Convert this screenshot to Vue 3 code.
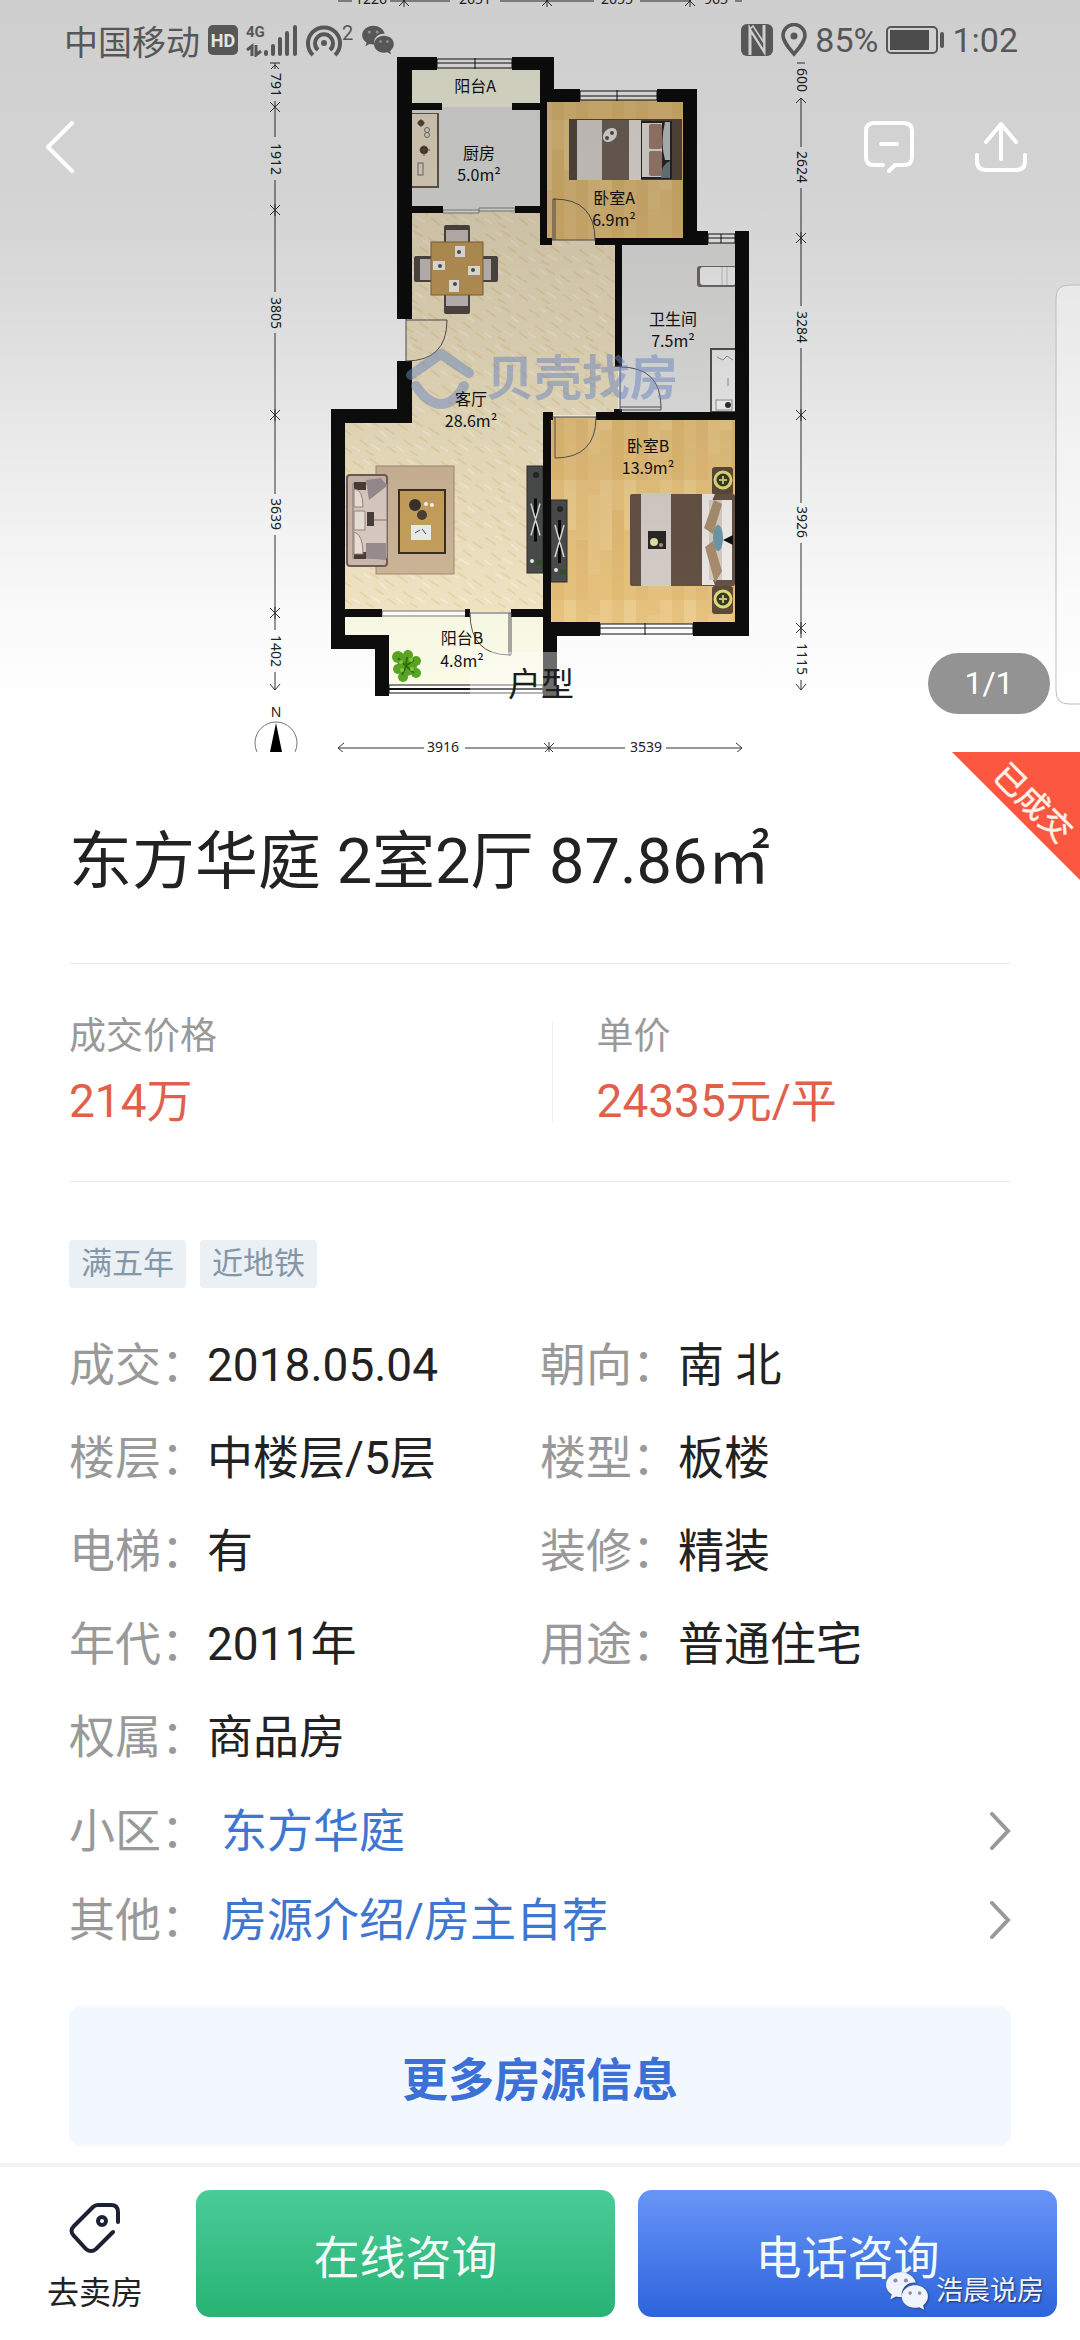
<template>
  <div class="page">
    <section class="hero">
      <svg class="plan" viewBox="0 0 1080 752" role="img" aria-label="户型图">
        <defs>
          <linearGradient id="shade" x1="0" y1="0" x2="0" y2="1">
            <stop offset="0" stop-color="#000" stop-opacity="0.19" />
            <stop offset="0.27" stop-color="#000" stop-opacity="0.17" />
            <stop offset="0.44" stop-color="#000" stop-opacity="0.13" />
            <stop offset="0.6" stop-color="#000" stop-opacity="0.08" />
            <stop offset="0.8" stop-color="#000" stop-opacity="0.025" />
            <stop offset="0.95" stop-color="#000" stop-opacity="0" />
          </linearGradient>
          <pattern id="wood" width="60" height="120" patternUnits="userSpaceOnUse">
            <rect width="60" height="120" fill="#ebc680" />
            <rect x="0" y="0" width="12" height="70" fill="#efcd8c" />
            <rect x="12" y="30" width="12" height="90" fill="#e7bf76" />
            <rect x="24" y="0" width="12" height="50" fill="#f0d091" />
            <rect x="36" y="60" width="12" height="60" fill="#e8c07a" />
            <rect x="48" y="15" width="12" height="80" fill="#edca87" />
          </pattern>
          <pattern id="marble" width="44" height="38" patternUnits="userSpaceOnUse">
            <rect width="44" height="38" fill="#f4e7c6" />
            <path d="M2 6l9 6M18 3l8 5M33 10l9 6M8 22l8 6M24 19l7 5M36 29l7 5M14 33l7 4" stroke="#e6cd93" stroke-width="2" stroke-linecap="round" opacity="0.5" />
            <path d="M12 4l6 4M28 13l6 5M1 29l6 4M20 27l8 5" stroke="#faf1d9" stroke-width="2" stroke-linecap="round" />
          </pattern>
          <symbol id="wechat" viewBox="0 0 42 38">
            <path fill="currentColor" d="M15 1C7 1 1 6.500 1 13c0 4 2 7 5.500 9.300L5 27l5.500-2.800c1.500.4 3 .6 4.500.6h1.200C14.500 17 21 10.500 29 11h.5C28 5 22 1 15 1z" />
            <path fill="currentColor" d="M41 24c0-6-5.500-10.500-12.500-10.500S16 18.500 16 24.500 21.500 35 28.500 35c1.500 0 3-.2 4.300-.6L37.500 37l-1.200-4.200C39.300 30.600 41 27.500 41 24z" />
            <g class="eyes"><circle cx="10" cy="9" r="2" /><circle cx="20" cy="9" r="2" /><circle cx="24" cy="21" r="1.700" /><circle cx="33" cy="21" r="1.700" /></g>
          </symbol>
        </defs>

        <rect width="1080" height="752" fill="#fff" />

        <!-- 地面 -->
        <rect x="412" y="68" width="128" height="40" fill="#fafbe6" />
        <rect x="412" y="107" width="128" height="103" fill="#e9e9e7" />
        <path d="M406 319H412V210H541V238H618V415H547V612H342V420H412V361H406Z" fill="url(#marble)" />
        <rect x="547" y="100" width="136" height="140" fill="url(#wood)" />
        <rect x="620" y="243" width="116" height="171" fill="#eaeae9" />
        <rect x="550" y="417" width="186" height="208" fill="url(#wood)" />
        <path d="M342 614H545V692H388V638H342Z" fill="#fcfde8" />

        <!-- 厨房与餐桌 -->
        <rect x="412" y="113" width="27" height="75" fill="#665f50" />
        <rect x="412" y="114" width="25" height="72" fill="#f2e5cf" />
        <g fill="#443a2d"><circle cx="421" cy="123" r="3" /><circle cx="424" cy="150" r="4" /></g>
        <path d="M417 123h8M421 119v8M419 150h11M424 145v11" stroke="#6b5c49" />
        <g fill="none" stroke="#777"><circle cx="427" cy="130" r="2.500" /><circle cx="427" cy="135" r="2.500" /><rect x="418" y="163" width="5" height="12" /></g>
        <g fill="#544b46">
          <rect x="444" y="225" width="26" height="22" rx="2" /><rect x="444" y="290" width="26" height="24" rx="2" />
          <rect x="414" y="256" width="22" height="26" rx="2" /><rect x="476" y="256" width="22" height="26" rx="2" />
        </g>
        <g fill="#cfc6c4">
          <rect x="446" y="230" width="22" height="16" /><rect x="446" y="292" width="22" height="14" />
          <rect x="420" y="259" width="14" height="21" /><rect x="478" y="259" width="13" height="21" />
        </g>
        <rect x="431" y="242" width="52" height="53" fill="#c79f5d" stroke="#8e6d38" />
        <g fill="#fbf8f0"><rect x="455" y="246" width="10" height="11" /><rect x="433" y="261" width="12" height="9" /><rect x="468" y="266" width="12" height="9" /><rect x="449" y="280" width="10" height="12" /></g>
        <g fill="#555"><circle cx="459" cy="252" r="2" /><circle cx="440" cy="266" r="2" /><circle cx="473" cy="270" r="2" /><circle cx="455" cy="284" r="2" /></g>

        <!-- 卧室A的床 -->
        <rect x="569" y="119" width="113" height="61" fill="#5c4c42" />
        <rect x="577" y="120" width="25" height="60" fill="#e2dcd6" />
        <rect x="602" y="120" width="27" height="60" fill="#75675d" />
        <rect x="629" y="120" width="12" height="60" fill="#f1e9e3" />
        <rect x="641" y="121" width="31" height="58" fill="#2a2726" />
        <rect x="642" y="123" width="20" height="54" fill="#efebe6" />
        <rect x="649" y="124" width="13" height="25" rx="2" fill="#a78576" />
        <rect x="649" y="151" width="13" height="25" rx="2" fill="#a78576" />
        <path d="M665 122q-5 20 0 38h5v-38z" fill="#c6cdd0" />
        <path d="M661 178q0-14 9-17v17z" fill="#71838a" />
        <ellipse cx="610" cy="135" rx="8" ry="6" fill="#f1ece6" transform="rotate(-45 610 135)" />
        <circle cx="607" cy="138" r="2" fill="#555" /><circle cx="612" cy="133" r="2" fill="#555" />

        <!-- 卫生间 -->
        <rect x="697" y="266" width="39" height="21" rx="3" fill="#77716d" />
        <rect x="700" y="267" width="36" height="18" rx="3" fill="#fff" />
        <path d="M722 267v18M727 267v18" stroke="#ccc" />
        <rect x="711" y="349" width="25" height="63" fill="#f7f7f7" stroke="#5b5450" stroke-width="2" />
        <path d="M717 357l6 3 4-4 6 4M728 378v8" stroke="#999" fill="none" />
        <rect x="716" y="400" width="16" height="10" fill="#fff" stroke="#999" /><circle cx="728" cy="405" r="3" fill="#333" />

        <!-- 客厅家具 -->
        <rect x="376" y="466" width="78" height="108" fill="#d2b99b" stroke="#a38e75" />
        <rect x="347" y="475" width="40" height="91" rx="3" fill="#d0bcb2" stroke="#6f6059" stroke-width="2" />
        <rect x="353" y="484" width="34" height="74" fill="#e1d1c8" stroke="#8b7c74" />
        <path d="M354 482h12v8h-12zM354 552h12v7h-12zM367 512h7v14h-7z" fill="#4c3f3a" />
        <path d="M354 489q9 0 9 18h-9zM354 511h11v19h-11zM354 532q9 2 9 22h-9z" fill="#f1e7df" stroke="#9a8b82" />
        <path d="M366 480l15-2 6 8-18 14zM366 543h20v17l-20-2z" fill="#9b9192" />
        <path d="M374 520h13" stroke="#8b7c74" />
        <rect x="399" y="490" width="46" height="63" fill="#cba45f" stroke="#3c3023" stroke-width="2" />
        <circle cx="415" cy="505" r="6" fill="#3a332d" /><circle cx="422" cy="515" r="5" fill="#4b423a" />
        <circle cx="426" cy="504" r="2" fill="#fff" /><circle cx="432" cy="505" r="2" fill="#fff" />
        <rect x="411" y="525" width="20" height="15" fill="#f3f5f4" />
        <path d="M415 533l5-3M422 529l4 5" stroke="#444" />
        <g v-for="tv in tvs" :key="tv.y" :transform="`translate(${tv.x} ${tv.y})`">
          <rect width="16" :height="tv.h" fill="#4b4d4c" stroke="#2f302f" />
          <rect x="7" :y="tv.h / 2 - 21" width="3" height="43" fill="#080808" />
          <path :d="`M4 ${tv.h / 2 - 16}L13 ${tv.h / 2 + 16}M13 ${tv.h / 2 - 16}L4 ${tv.h / 2 + 16}`" stroke="#ddd" stroke-width="1.500" />
          <circle cx="9" cy="9" r="3" fill="#24272b" /><circle cx="5" :cy="tv.h - 12" r="2" fill="#eee" /><circle cx="12" :cy="tv.h - 10" r="3" fill="#38502d" />
        </g>

        <!-- 卧室B的床 -->
        <rect x="712" y="467" width="21" height="28" rx="3" fill="#5f4b39" />
        <rect x="712" y="586" width="21" height="28" rx="3" fill="#5f4b39" />
        <g fill="#3b3a25" stroke="#dfe07a" stroke-width="3"><circle cx="723" cy="480" r="8" /><circle cx="723" cy="599" r="8" /></g>
        <path d="M719 480h8M723 476v8M719 599h8M723 595v8" stroke="#c9ca70" stroke-width="2" />
        <rect x="630" y="494" width="105" height="92" rx="2" fill="#665347" />
        <rect x="641" y="493" width="30" height="93" fill="#d8d1cc" />
        <path d="M702 494h13l-6 14v62l6 15h-13z" fill="#eeebe8" />
        <rect x="709" y="500" width="23" height="80" fill="#d9cfc6" />
        <path d="M722 500h10v80h-10z" fill="#f4f1ee" />
        <path d="M714 500l8 4-9 30-9-6zM713 541l9 30-7 12-10-36z" fill="#ab9070" />
        <ellipse cx="718" cy="538" rx="5" ry="13" fill="#6f9bab" />
        <path d="M723 540l10-5v10z" fill="#111" />
        <rect x="648" y="531" width="18" height="18" fill="#2b2724" /><circle cx="654" cy="542" r="4" fill="#e5e3a8" /><circle cx="661" cy="545" r="2" fill="#999" />

        <!-- 绿植 -->
        <g fill="#5aa524">
          <circle cx="398" cy="657" r="6" /><circle cx="408" cy="655" r="5" /><circle cx="416" cy="661" r="5" />
          <circle cx="416" cy="673" r="5" /><circle cx="403" cy="677" r="5" /><circle cx="398" cy="669" r="5" /><circle cx="407" cy="666" r="10" />
        </g>
        <path d="M398 658l8 8 8-6M406 666l8 7M406 666l-4 9M406 666l1-9" stroke="#2f7010" stroke-width="2" fill="none" />
        <g fill="#86cc3c"><circle cx="401" cy="662" r="2" /><circle cx="411" cy="660" r="2" /><circle cx="412" cy="669" r="2" /><circle cx="402" cy="670" r="2" /></g>

        <!-- 窗 -->
        <g fill="#fff" stroke="#111">
          <rect x="437" y="59" width="75" height="9" /><path d="M437 63h75M475 58v11" />
          <rect x="580" y="91" width="77" height="9" /><path d="M580 96h77M617 90v11" />
          <rect x="708" y="234" width="27" height="9" /><path d="M708 238h27M721 234v9" />
          <rect x="600" y="624" width="93" height="10" /><path d="M600 628h93M645 623v12" />
          <rect x="389" y="685" width="154" height="8" /><path d="M389 689h154" stroke-width="2" />
          <rect x="382" y="611" width="84" height="5" stroke="#777" />
        </g>
        <path d="M443 210h36v3h-36zM479 208h36v3h-36z" fill="#eee" stroke="#888" />

        <!-- 墙体 -->
        <path
          fill="#0d0d0d"
          d="M397 57h40v13h-25v33h30v7h-30v96h31v7h-31v106h-15zM512 57h42v32h26v13h-33v136h5v7h-12v-32h-25v-7h25v-96h-28v-7h28V70h-28z
             M657 89h40v142h11v14h-86v122h-7V245h-20v-7h88V102h-26zM735 231h14v405h-56v-14h42V420H596v-8h18v-3h8v3h113z
             M397 361h15v62h-67v186h37v8h-37v18h44v61h-14v-47h-44V409h66zM543 412h10v8h-2v202h49v14h-43v60h-14v-79h-32v-8h32zM465 609h5v8h-5z"
        />

        <!-- 门 -->
        <g fill="none" stroke="#555">
          <path d="M406 319v42M406 320h41q0 41-41 41" />
          <path d="M552 240h43M553 240v-41h2v41M554 199q41 0 41 41" />
          <path d="M620 367v43h41v-3h-41M620 367q41 0 41 40" />
          <path d="M552 417h44q0 41-41 41v-41" />
          <path d="M470 613h41v42h-2v-42M470 613q0 42 40 42" />
        </g>

        <!-- 水印 -->
        <g opacity="0.5" fill="none" stroke="#7796d6" stroke-width="10" stroke-linecap="round" stroke-linejoin="round">
          <path d="M411 375l30-21 28 19" />
          <path d="M416 386q12 18 25 18t23-18" />
        </g>
        <text x="486" y="395" class="brand">贝壳找房</text>

        <rect x="470" y="652" width="140" height="46" fill="#fff" opacity="0.4" />

        <g class="room">
          <text v-for="r in rooms" :key="r.t + r.y" :x="r.x" :y="r.y">{{ r.t }}</text>
        </g>

        <!-- 尺寸标注 -->
        <g stroke="#333" fill="none">
          <path d="M275 113v24M275 180v30M275 210v82M275 333v82M275 415v79M275 535v78M275 613v17M275 672v18" />
          <path d="M801 98v49M801 188v50M801 238v68M801 348v67M801 415v88M801 543v85M801 628v10M801 680v10" />
          <path d="M338 748h86M465 748h84M549 748h76M666 748h76M338 1h14M390 1h60M500 1h94M640 1h50M735 1h7" />
          <path v-for="s in stars" :key="s[0] + '-' + s[1]" :d="`M${s[0] - 5} ${s[1] - 5}l10 10M${s[0] + 5} ${s[1] - 5}l-10 10M${s[0]} ${s[1] - 6}v12`" />
          <path d="M270 63h10M275 63v6M271 69l4-4 4 4M797 63h8M796 103l5-5 5 5M270 684l5 6 5-6M796 684l5 6 5-6M344 743l-6 5 6 5M736 743l6 5-6 5" />
        </g>
        <g class="dim">
          <text v-for="d in sideDims" :key="d.x + d.t" :transform="`translate(${d.x} ${d.y}) rotate(90)`">{{ d.t }}</text>
          <text v-for="d in flatDims" :key="d.t" :x="d.x" :y="d.y">{{ d.t }}</text>
          <text x="276" y="717">N</text>
        </g>
        <circle cx="276" cy="743" r="21" fill="none" stroke="#777" />
        <path d="M276 723l6 29h-12z" fill="#000" />

        <rect width="1080" height="752" fill="url(#shade)" />
        <text x="541" y="696" class="caption">户型</text>
        <path d="M1081 285h-12q-13 0-13 13v393q0 13 13 13h12" fill="#fff" fill-opacity="0.4" stroke="#bdbdbd" />
      </svg>

      <div class="hero-top">
        <div class="status">
          <span>中国移动</span>
          <svg width="30" height="30" viewBox="0 0 30 30"><rect width="30" height="30" rx="5" fill="#575757" /><text x="15" y="22" class="hd">HD</text></svg>
          <svg width="52" height="34" viewBox="0 0 52 34">
            <text x="0" y="14" class="net">4G</text>
            <path d="M1 27l5-4v10M10 22v10l5-4" fill="none" stroke="#575757" stroke-width="3" />
            <path d="M20 29v2M27 23v8M34 16v15M41 10v21M49 4v27" stroke="#575757" stroke-width="4" stroke-linecap="round" />
          </svg>
          <span class="hotspot">
            <svg width="36" height="34" viewBox="0 0 36 34" fill="none" stroke="#575757" stroke-width="4">
              <path d="M7 32a16 16 0 1 1 22 0M12 27a9 9 0 1 1 12 0" />
              <circle cx="18" cy="20" r="3" fill="#575757" stroke="none" />
            </svg>
            <span class="count">2</span>
          </span>
          <svg width="34" height="30"><use href="#wechat" /></svg>
          <span class="spacer"></span>
          <svg width="32" height="32" viewBox="0 0 32 32">
            <rect width="32" height="32" rx="6" fill="#575757" />
            <path d="M9 31V5l14 22V1" fill="none" stroke="#cfcfcf" stroke-width="3" />
            <path d="M9 5l14 22v-8L12 2z" fill="#575757" stroke="#cfcfcf" stroke-width="1.500" />
          </svg>
          <svg width="26" height="34" viewBox="0 0 26 34">
            <path d="M13 31C7 24 2 18 2 12.500a11 11 0 0 1 22 0C24 18 19 24 13 31z" fill="none" stroke="#575757" stroke-width="3.500" />
            <circle cx="13" cy="13" r="3.500" fill="#575757" />
          </svg>
          <span>85%</span>
          <svg width="58" height="28" viewBox="0 0 58 28">
            <rect x="1" y="1" width="50" height="26" rx="4" fill="none" stroke="#575757" stroke-width="2" />
            <rect x="4" y="4" width="39" height="20" fill="#4c4c4c" /><rect x="54" y="6" width="4" height="16" rx="2" fill="#575757" />
          </svg>
          <span>1:02</span>
        </div>
        <nav class="nav">
          <button class="icon-btn" aria-label="返回">
            <svg width="30" height="52" viewBox="0 0 30 52"><path d="M27 2L3 26l24 24" /></svg>
          </button>
          <span class="spacer"></span>
          <button class="icon-btn" aria-label="消息">
            <svg width="50" height="52" viewBox="0 0 50 52"><path d="M19 44H10q-8 0-8-8V10q0-8 8-8h30q8 0 8 8v26q0 8-8 8H31l-6 6M17 23h16" /></svg>
          </button>
          <button class="icon-btn" aria-label="分享">
            <svg width="54" height="52" viewBox="0 0 54 52"><path d="M27 38V3M12 21L27 3l15 18M3 34v6q0 9 9 9h30q9 0 9-9v-6" /></svg>
          </button>
        </nav>
      </div>
      <span class="counter">1/1</span>
    </section>

    <main class="detail">
      <svg class="ribbon" width="128" height="128" viewBox="0 0 128 128">
        <path d="M0 0h128v128z" fill="#fb563f" />
        <text transform="translate(83 49) rotate(45)">已成交</text>
      </svg>
      <h1>东方华庭 2室2厅 87.86㎡</h1>

      <div class="prices">
        <div class="price">
          <span class="price-label">成交价格</span>
          <span class="price-value">214万</span>
        </div>
        <i class="sep"></i>
        <div class="price unit">
          <span class="price-label">单价</span>
          <span class="price-value">24335元/平</span>
        </div>
      </div>

      <div class="tags">
        <span v-for="tag in tags" :key="tag" class="tag">{{ tag }}</span>
      </div>

      <dl class="info">
        <div v-for="item in info" :key="item.label" class="info-item">
          <dt>{{ item.label }}：</dt>
          <dd>{{ item.value }}</dd>
        </div>
      </dl>

      <div class="links">
        <div v-for="link in links" :key="link.label" class="link-row">
          <span class="link-label">{{ link.label }}：</span>
          <a href="#">
            {{ link.value }}
            <svg width="22" height="38" viewBox="0 0 22 38"><path d="M3 2l16 17L3 36" /></svg>
          </a>
        </div>
      </div>

      <button class="more">更多房源信息</button>
    </main>

    <footer class="bottom-bar">
      <button class="sell">
        <svg width="52" height="52" viewBox="0 0 52 52">
          <path d="M49 20V10q0-7-7-7H29q-3 0-5 2L5 24q-5 5 0 10l12 13q5 4 10 0l17-17" />
          <circle cx="33" cy="19" r="4" />
        </svg>
        <span>去卖房</span>
      </button>
      <button class="contact online">在线咨询</button>
      <button class="contact phone">电话咨询</button>
      <div class="author">
        <svg width="44" height="40"><use href="#wechat" /></svg>
        <span>浩晨说房</span>
      </div>
    </footer>
  </div>
</template>

<script setup>
const tags = ['满五年', '近地铁']

const info = [
  { label: '成交', value: '2018.05.04' },
  { label: '朝向', value: '南 北' },
  { label: '楼层', value: '中楼层/5层' },
  { label: '楼型', value: '板楼' },
  { label: '电梯', value: '有' },
  { label: '装修', value: '精装' },
  { label: '年代', value: '2011年' },
  { label: '用途', value: '普通住宅' },
  { label: '权属', value: '商品房' }
]

const links = [
  { label: '小区', value: '东方华庭' },
  { label: '其他', value: '房源介绍/房主自荐' }
]

// 户型图数据
const rooms = [
  { t: '阳台A', x: 475, y: 92 },
  { t: '厨房', x: 479, y: 159 },
  { t: '5.0m²', x: 479, y: 181 },
  { t: '卧室A', x: 614, y: 204 },
  { t: '6.9m²', x: 614, y: 226 },
  { t: '卫生间', x: 673, y: 325 },
  { t: '7.5m²', x: 673, y: 347 },
  { t: '客厅', x: 471, y: 405 },
  { t: '28.6m²', x: 471, y: 427 },
  { t: '卧室B', x: 648, y: 452 },
  { t: '13.9m²', x: 648, y: 474 },
  { t: '阳台B', x: 462, y: 644 },
  { t: '4.8m²', x: 462, y: 667 }
]

const tvs = [
  { x: 527, y: 466, h: 107 },
  { x: 551, y: 500, h: 82 }
]

const stars = [
  [275, 107], [275, 210], [275, 415], [275, 613],
  [801, 238], [801, 415], [801, 628],
  [549, 748], [404, 1], [547, 1], [690, 1]
]

const sideDims = [
  { t: '791', x: 271, y: 85 },
  { t: '1912', x: 271, y: 159 },
  { t: '3805', x: 271, y: 313 },
  { t: '3639', x: 271, y: 514 },
  { t: '1402', x: 271, y: 651 },
  { t: '600', x: 797, y: 80 },
  { t: '2624', x: 797, y: 167 },
  { t: '3284', x: 797, y: 327 },
  { t: '3926', x: 797, y: 522 },
  { t: '1115', x: 797, y: 659 }
]

const flatDims = [
  { t: '1226', x: 371, y: 4 },
  { t: '2651', x: 475, y: 4 },
  { t: '2655', x: 617, y: 4 },
  { t: '965', x: 716, y: 4 },
  { t: '3916', x: 443, y: 752 },
  { t: '3539', x: 646, y: 752 }
]
</script>

<style>
body {
  background: #fff;
}
</style>

<style scoped>
.page {
  font-family: Roboto, "Noto Sans CJK SC", sans-serif;
  color: #222;
}

button {
  border: none;
  padding: 0;
  background: none;
  font-family: inherit;
  cursor: pointer;
}

.spacer {
  flex: 1;
}

/* 顶部图片区 */
.hero {
  display: grid;
  overflow: hidden;
}

.hero > * {
  grid-area: 1 / 1;
}

.plan {
  display: block;
  width: 100%;
}

.room text {
  font: 16px "Noto Sans CJK SC", sans-serif;
  fill: #111;
  text-anchor: middle;
}

.dim text {
  font: 14px "Noto Sans", sans-serif;
  fill: #222;
  text-anchor: middle;
}

.brand {
  font: 700 48px "Noto Sans CJK SC", sans-serif;
  fill: #7796d6;
  opacity: 0.5;
}

.caption {
  font: 33px "Noto Sans CJK SC", sans-serif;
  fill: #1d1d1d;
  text-anchor: middle;
}

.hero-top {
  align-self: start;
}

.status {
  display: flex;
  align-items: center;
  height: 80px;
  padding: 0 62px 0 64px;
  gap: 8px;
  font-size: 34px;
  color: #575757;
}

.hotspot {
  display: flex;
  align-items: flex-start;
}

.count {
  font-size: 20px;
  line-height: 20px;
}

.hd {
  font: bold 18px Roboto, sans-serif;
  fill: #e4e4e4;
  text-anchor: middle;
}

.net {
  font: bold 15px Roboto, sans-serif;
  fill: #575757;
}

.eyes {
  fill: #8d9099;
}

.nav {
  display: flex;
  align-items: center;
  gap: 60px;
  height: 134px;
  padding: 0 52px 0 45px;
}

.icon-btn svg {
  display: block;
  fill: none;
  stroke: #fff;
  stroke-width: 4;
  stroke-linecap: round;
  stroke-linejoin: round;
}

.counter {
  place-self: end;
  width: 122px;
  margin: 0 30px 38px 0;
  border-radius: 31px;
  background: #939393;
  color: #fff;
  font-size: 32px;
  line-height: 61px;
  text-align: center;
}

/* 详情 */
.detail {
  position: relative;
  padding: 0 69px;
}

.ribbon {
  position: absolute;
  top: 0;
  right: 0;
}

.ribbon text {
  font: 500 32px "Noto Sans CJK SC", sans-serif;
  fill: #ffeee6;
  text-anchor: middle;
  dominant-baseline: central;
}

h1 {
  margin: 0;
  padding: 65px 0 56px;
  border-bottom: 1px solid #e9e9e9;
  font-size: 63px;
  font-weight: 400;
  line-height: 90px;
}

.prices {
  display: flex;
  align-items: center;
  padding: 49px 0 50px;
  border-bottom: 1px solid #ececec;
}

.price {
  display: flex;
  flex: 1;
  flex-direction: column;
  gap: 10px;
}

.price.unit {
  flex: 0 0 44%;
}

.sep {
  width: 1px;
  height: 100px;
  margin-right: 44px;
  background: #eee;
}

.price-label {
  color: #999;
  font-size: 37px;
  line-height: 48px;
}

.price-value {
  color: #e0604c;
  font-size: 46px;
  line-height: 60px;
}

.tags {
  display: flex;
  gap: 14px;
  padding-top: 58px;
}

.tag {
  padding: 0 12px;
  border-radius: 4px;
  background: #ebf0f4;
  color: #8497a8;
  font-size: 31px;
  line-height: 48px;
}

.info {
  display: grid;
  grid-template-columns: 1fr 1fr;
  row-gap: 31px;
  margin: 46px 0 0;
  font-size: 46px;
  line-height: 62px;
}

.info-item {
  display: flex;
}

.info dt,
.link-label {
  color: #999;
}

.info dd {
  margin: 0;
}

.links {
  display: flex;
  flex-direction: column;
  gap: 27px;
  margin-top: 32px;
  font-size: 46px;
  line-height: 62px;
}

.link-row {
  display: flex;
  gap: 14px;
}

.link-row a {
  display: flex;
  flex: 1;
  align-items: center;
  justify-content: space-between;
  color: #3f76d0;
  text-decoration: none;
}

.link-row svg {
  fill: none;
  stroke: #999;
  stroke-width: 4;
  stroke-linecap: round;
}

.more {
  width: 100%;
  height: 140px;
  margin: 55px 0 17px;
  border-radius: 12px;
  background: #f3f8fe;
  color: #3b70d6;
  font-size: 46px;
  font-weight: 700;
}

/* 底部操作栏 */
.bottom-bar {
  position: relative;
  display: flex;
  gap: 23px;
  padding: 23px 23px 23px 17px;
  border-top: 4px solid #f3f3f3;
}

.sell {
  display: flex;
  flex-direction: column;
  align-items: center;
  gap: 16px;
  width: 156px;
  padding-top: 12px;
  color: #222;
  font-size: 32px;
  line-height: 46px;
}

.sell svg {
  fill: none;
  stroke: #1b2033;
  stroke-width: 4;
  stroke-linecap: round;
}

.contact {
  flex: 1;
  height: 127px;
  border-radius: 14px;
  color: #f2fbf8;
  font-size: 46px;
}

.online {
  background: linear-gradient(#49cc98, #28b374);
}

.phone {
  background: linear-gradient(#6895f7, #2d64dc);
}

.author {
  position: absolute;
  right: 36px;
  bottom: 29px;
  display: flex;
  align-items: center;
  gap: 7px;
  color: #eef3fd;
  font-size: 27px;
  line-height: 40px;
  text-shadow: 1px 1px 2px #1b2f5c;
}

.author svg {
  filter: drop-shadow(1px 1px 1px #2a4278);
}
</style>
